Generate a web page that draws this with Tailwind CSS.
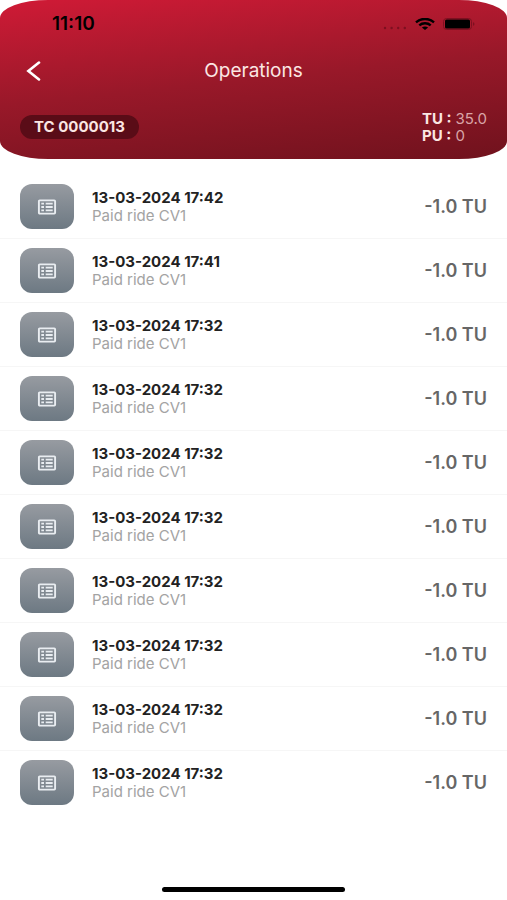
<!DOCTYPE html>
<html lang="en">
  <head>
    <meta charset="UTF-8" />
    <meta name="viewport" content="width=device-width, initial-scale=1.0" />
    <title>Operations</title>
    <script src="https://cdn.jsdelivr.net/npm/@tailwindcss/browser@4"></script>
  </head>
  <body class="min-h-screen flex flex-col bg-white font-['Inter',sans-serif]">
    <header
      class="rounded-[48px_/_18px] bg-linear-174 from-[#d01a36] via-[#981829] to-[#70121d] px-5 pt-3 pb-[15px] text-[#fbe6e3]"
    >
      <!-- status bar -->
      <div class="flex h-6 items-center justify-between pl-8 pr-3 text-black">
        <span class="text-[19px] leading-6 font-semibold">11:10</span>
        <div class="flex items-center gap-2">
          <svg class="mt-2 h-1 w-6" viewBox="0 0 24 4" fill="#7d1020">
            <circle cx="2" cy="2" r="1.2" />
            <circle cx="8.6" cy="2" r="1.2" />
            <circle cx="15.2" cy="2" r="1.2" />
            <circle cx="21.8" cy="2" r="1.2" />
          </svg>
          <svg class="h-3 w-5" viewBox="0 0 20 12" fill="none" stroke="#000" stroke-width="2.4">
            <path d="M1 4.3C6-0.2 14-0.2 19 4.3" />
            <path d="M4.3 7.4C7.5 4.5 12.5 4.5 15.7 7.4" />
            <path d="M10 12L6.9 9.6C8.6 8 11.4 8 13.1 9.6Z" fill="#000" stroke="none" />
          </svg>
          <svg class="h-3 w-8" viewBox="0 0 32 12">
            <rect x="0.5" y="0.5" width="28" height="11" rx="3" fill="none" stroke="#7d1020" />
            <rect x="2" y="1.5" width="25" height="9" rx="1.5" fill="#000" />
            <path d="M30 4C32 5 32 7 30 8Z" fill="#7d1020" />
          </svg>
        </div>
      </div>

      <div class="mt-5 grid grid-cols-[1fr_auto_1fr] items-center">
        <button type="button" aria-label="Back" class="flex h-[30px] w-8 items-center pl-1.5">
          <svg class="h-5 w-4" viewBox="0 0 16 20" fill="none" stroke="#fff" stroke-width="2.6">
            <path d="M13 1.6L2.4 10L13 18.4" stroke-linecap="round" />
          </svg>
        </button>
        <h1 class="text-[19px] leading-6">Operations</h1>
      </div>

      <div class="mt-6 flex items-center justify-between">
        <span class="rounded-full bg-[#5a0c17] px-3.5 text-[15px] leading-6 font-bold">TC 0000013</span>
        <dl class="grid grid-cols-[auto_auto] gap-x-1 text-[15px] leading-[17px]">
          <dt class="font-bold">TU :</dt>
          <dd class="text-[#d9a5a8]">35.0</dd>
          <dt class="font-bold">PU :</dt>
          <dd class="text-[#d9a5a8]">0</dd>
        </dl>
      </div>
    </header>

    <main class="flex-1 pt-4">
      <ul id="operations"></ul>
    </main>

    <footer class="flex justify-center pt-4 pb-2">
      <div class="h-[5px] w-[36%] rounded-full bg-black"></div>
    </footer>

    <script>
      const operations = [
        "13-03-2024 17:42",
        "13-03-2024 17:41",
        "13-03-2024 17:32",
        "13-03-2024 17:32",
        "13-03-2024 17:32",
        "13-03-2024 17:32",
        "13-03-2024 17:32",
        "13-03-2024 17:32",
        "13-03-2024 17:32",
        "13-03-2024 17:32",
      ];

      document.getElementById("operations").innerHTML = operations
        .map(
          (date) => `
        <li class="flex h-16 items-center border-b border-[#f6f6f6] px-5 last:border-transparent">
          <span class="flex h-[45px] w-[54px] items-center justify-center rounded-xl bg-linear-to-b from-[#979ba1] to-[#6d7983]">
            <svg class="h-4 w-5" viewBox="0 0 20 16" fill="none" stroke="#e9edf1">
              <rect x="1.9" y="1.4" width="16.2" height="13.2" rx="0.8" stroke-width="1.9" />
              <path d="M4.3 4.7H7M4.3 8H7M4.3 11.3H7M8.7 4.7H15.7M8.7 8H15.7M8.7 11.3H15.7" stroke-width="1.8" />
            </svg>
          </span>
          <div class="ml-[18px] flex-1">
            <p class="text-[15px] leading-[18px] font-bold text-[#222]">${date}</p>
            <p class="text-[15px] leading-[18px] text-[#a3a3a3]">Paid ride CV1</p>
          </div>
          <span class="text-lg leading-6 font-semibold text-[#666]">-1.0 TU</span>
        </li>`
        )
        .join("");
    </script>
  </body>
</html>
